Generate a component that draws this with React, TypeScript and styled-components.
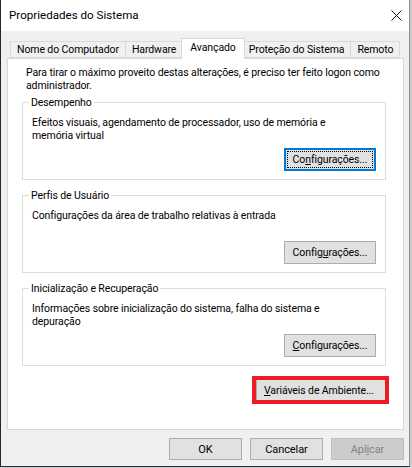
import { createGlobalStyle, styled } from 'styled-components';

const GlobalStyle = createGlobalStyle`
  html, body {
    margin: 0;
    padding: 0;
    background: #c9cccc;
  }
  body {
    font-family: Roboto, "Liberation Sans", sans-serif;
    font-size: 10.5px;
    letter-spacing: -0.1px;
    color: #000;
  }
`;

const tabs = ['Nome do Computador', 'Hardware', 'Avançado', 'Proteção do Sistema', 'Remoto'];

export default function App() {
  return (
    <>
      <GlobalStyle />
      <S.Window>
        <S.TitleBar>
          <S.Title>Propriedades do Sistema</S.Title>
          <S.Close>
            <svg width="11" height="11" viewBox="0 0 11 11">
              <path d="M0.5 0.5 L10.5 10.5 M10.5 0.5 L0.5 10.5" stroke="#111" strokeWidth="1" fill="none" />
            </svg>
          </S.Close>
        </S.TitleBar>
        <S.Client>
          <S.TabStrip>
            {tabs.map(t => (
              <S.Tab key={t} $active={t === 'Avançado'}>
                {t}
              </S.Tab>
            ))}
          </S.TabStrip>
          <S.Panel>
            <S.Intro>
              Para tirar o máximo proveito destas alterações, é preciso ter feito logon como
              <br />
              administrador.
            </S.Intro>

            <S.Group>
              <S.Legend>Desempenho</S.Legend>
              <S.Desc>
                Efeitos visuais, agendamento de processador, uso de memória e
                <br />
                memória virtual
              </S.Desc>
              <S.GroupActions>
                <S.Button $focused>
                  Co<S.Key>n</S.Key>figurações...
                </S.Button>
              </S.GroupActions>
            </S.Group>

            <S.Group>
              <S.Legend>Perfis de Usuário</S.Legend>
              <S.Desc>Configurações da área de trabalho relativas à entrada</S.Desc>
              <S.GroupActions>
                <S.Button>
                  Config<S.Key>u</S.Key>rações...
                </S.Button>
              </S.GroupActions>
            </S.Group>

            <S.Group>
              <S.Legend>Inicialização e Recuperação</S.Legend>
              <S.Desc>
                Informações sobre inicialização do sistema, falha do sistema e
                <br />
                depuração
              </S.Desc>
              <S.GroupActions>
                <S.Button>
                  <S.Key>C</S.Key>onfigurações...
                </S.Button>
              </S.GroupActions>
            </S.Group>

            <S.EnvRow>
              <S.RedFrame>
                <S.EnvButton>
                  <S.Key>V</S.Key>ariáveis de Ambiente...
                </S.EnvButton>
              </S.RedFrame>
            </S.EnvRow>
          </S.Panel>
          <S.Footer>
            <S.FooterButton>OK</S.FooterButton>
            <S.FooterButton>Cancelar</S.FooterButton>
            <S.FooterButton disabled>
              Apl<S.Key>i</S.Key>car
            </S.FooterButton>
          </S.Footer>
        </S.Client>
      </S.Window>
    </>
  );
}

const S = {
  Window: styled.div`
    width: 410px;
    height: 467px;
    box-sizing: border-box;
    display: flex;
    flex-direction: column;
    background: #f0f0f0;
    border-left: 1px solid #1d2b2b;
    border-right: 1px solid #8c8f8f;
    border-bottom: 1px solid #2a3333;
  `,
  TitleBar: styled.div`
    height: 31px;
    flex: none;
    background: #fff;
    display: flex;
    align-items: center;
    justify-content: space-between;
    padding: 0 6px 0 8px;
  `,
  Title: styled.div`
    font-size: 11.6px;
    letter-spacing: 0;
    color: #000;
    padding-bottom: 1px;
  `,
  Close: styled.div`
    display: flex;
    align-items: center;
    padding: 0 0 1px 0;
    margin-right: 1px;
  `,
  Client: styled.div`
    flex: 1;
    display: flex;
    flex-direction: column;
    padding: 7px 5px 0 6px;
  `,
  TabStrip: styled.div`
    display: flex;
    align-items: flex-end;
    height: 20px;
    padding-left: 3px;
  `,
  Tab: styled.div<{ $active?: boolean }>`
    position: relative;
    box-sizing: border-box;
    height: ${p => (p.$active ? '21px' : '17px')};
    line-height: ${p => (p.$active ? '17px' : '15px')};
    padding: ${p => (p.$active ? '0 8px' : '0 6px')};
    margin: ${p => (p.$active ? '0 -2px -1px -2px' : '0 0 0 -1px')};
    border: 1px solid #d9d9d9;
    border-bottom: ${p => (p.$active ? 'none' : '1px solid #d9d9d9')};
    background: ${p => (p.$active ? '#fff' : '#f0f0f0')};
    z-index: ${p => (p.$active ? 2 : 0)};
    white-space: nowrap;
    &:first-child {
      margin-left: 0;
    }
  `,
  Panel: styled.div`
    height: 372px;
    box-sizing: border-box;
    flex: none;
    background: #fff;
    border: 1px solid #d9d9d9;
    padding: 7px 17px 0 14px;
    display: flex;
    flex-direction: column;
  `,
  Intro: styled.p`
    margin: 0 0 4px 4px;
    line-height: 13px;
  `,
  Group: styled.fieldset`
    margin: 0 0 9px 0;
    min-width: 0;
    border: 1px solid #dcdcdc;
    padding: 7px 9px 8px 9px;
  `,
  Legend: styled.legend`
    padding: 0 2px;
    margin-left: -3px;
    line-height: 13px;
  `,
  Desc: styled.div`
    line-height: 13px;
    min-height: 26px;
  `,
  GroupActions: styled.div`
    display: flex;
    justify-content: flex-end;
    margin-top: 6px;
  `,
  Button: styled.button<{ $focused?: boolean }>`
    position: relative;
    width: 92px;
    height: 23px;
    box-sizing: border-box;
    padding: 0;
    font: inherit;
    letter-spacing: inherit;
    color: #000;
    background: #e1e1e1;
    border: 1px solid ${p => (p.$focused ? '#0078d7' : '#adadad')};
    box-shadow: ${p => (p.$focused ? 'inset 0 0 0 1px #0078d7' : 'none')};
    &::after {
      content: '';
      display: ${p => (p.$focused ? 'block' : 'none')};
      position: absolute;
      inset: 2px;
      border: 1px dotted #000;
    }
  `,
  Key: styled.span`
    text-decoration: underline;
  `,
  EnvRow: styled.div`
    display: flex;
    justify-content: flex-end;
    margin: 1px -3px 0 0;
  `,
  RedFrame: styled.div`
    border: 4px solid #ed1c24;
    display: flex;
  `,
  EnvButton: styled.button`
    width: 129px;
    height: 20px;
    box-sizing: border-box;
    padding: 0 0 0 7px;
    text-align: left;
    font: inherit;
    letter-spacing: inherit;
    color: #000;
    background: #e1e1e1;
    border: none;
    border-left: 1px solid #adadad;
  `,
  Footer: styled.div`
    display: flex;
    justify-content: flex-end;
    gap: 8px;
    padding-top: 8px;
  `,
  FooterButton: styled.button`
    width: 73px;
    height: 22px;
    box-sizing: border-box;
    padding: 0;
    font: inherit;
    font-size: 11px;
    letter-spacing: inherit;
    color: #000;
    background: #e1e1e1;
    border: 1px solid #adadad;
    &:disabled {
      color: #838383;
      background: #cccccc;
      border-color: #bfbfbf;
    }
  `,
};
